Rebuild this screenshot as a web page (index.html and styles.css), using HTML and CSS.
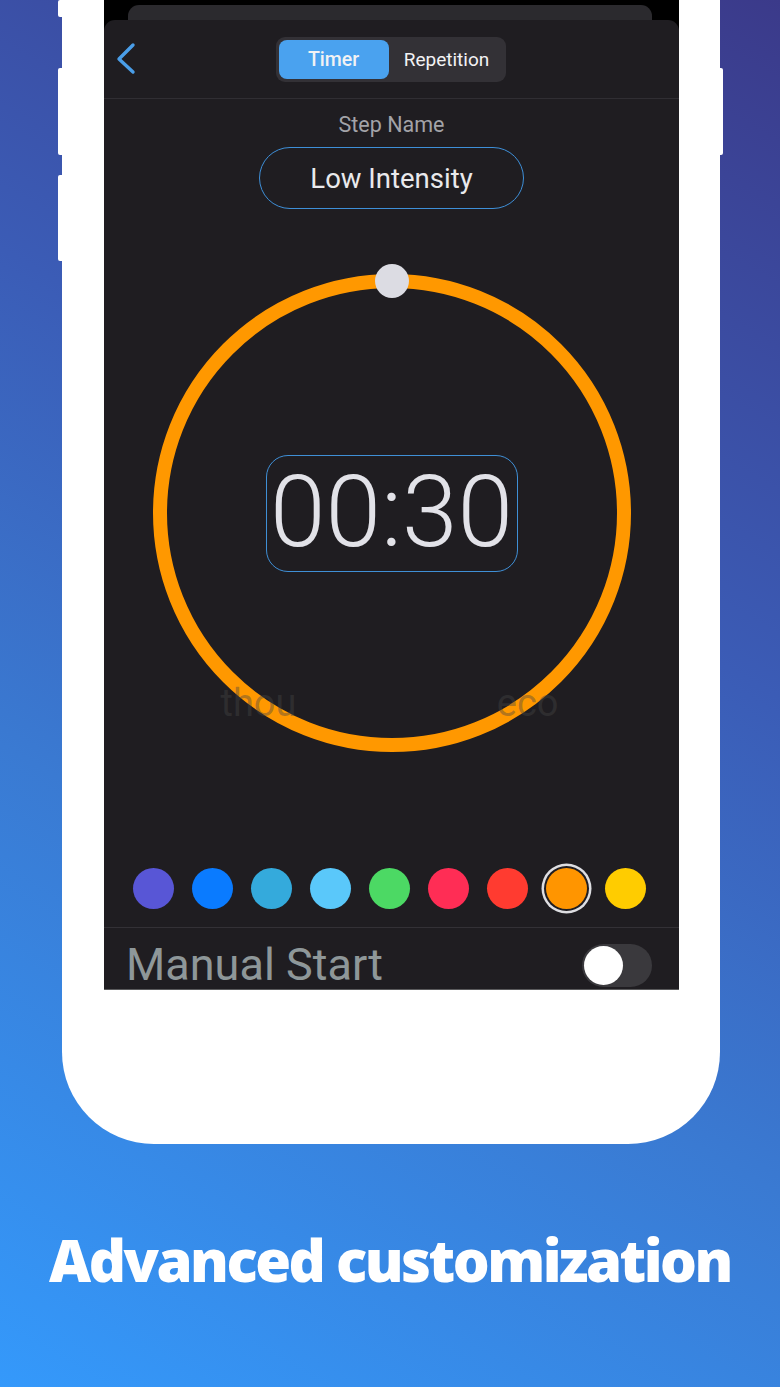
FILE: index.html
```html
<!DOCTYPE html>
<html lang="en">
<head>
<meta charset="utf-8">
<title>Advanced customization</title>
<link rel="stylesheet" href="styles.css">
</head>
<body>
<div class="page">
  <div class="phone">
    <span class="btn btn-l1"></span>
    <span class="btn btn-l2"></span>
    <span class="btn btn-l3"></span>
    <span class="btn btn-r1"></span>
    <div class="screen">
      <div class="back-card"></div>
      <div class="sheet">
        <div class="nav">
          <div class="nav-left">
            <svg class="chevron" width="22" height="34" viewBox="0 0 22 34"><path d="M17 3 L3 17 L17 30" fill="none" stroke="#4a9ee8" stroke-width="3.4" stroke-linecap="round" stroke-linejoin="round"/></svg>
          </div>
          <div class="segmented">
            <div class="seg seg-active">Timer</div>
            <div class="seg">Repetition</div>
          </div>
          <div class="nav-right"></div>
        </div>
        <div class="content">
          <div class="label">Step Name</div>
          <div class="pill">Low Intensity</div>
          <div class="dial">
            <div class="ghost"><span>thou</span><span>eco</span></div>
            <div class="handle"></div>
            <div class="time-box">00:30</div>
          </div>
          <div class="swatches">
            <span class="dot" style="background:#5856d6"></span>
            <span class="dot" style="background:#0a7bff"></span>
            <span class="dot" style="background:#34aadc"></span>
            <span class="dot" style="background:#5ac8fa"></span>
            <span class="dot" style="background:#4cd964"></span>
            <span class="dot" style="background:#ff2d55"></span>
            <span class="dot" style="background:#ff3b30"></span>
            <span class="dot dot-selected" style="background:#ff9500"></span>
            <span class="dot" style="background:#ffcc00"></span>
          </div>
          <div class="row">
            <span class="row-label">Manual Start</span>
            <span class="toggle"><span class="knob"></span></span>
          </div>
        </div>
      </div>
    </div>
  </div>
  <h1 class="title">Advanced customization</h1>
</div>
</body>
</html>
```
FILE: styles.css
```css
* { box-sizing: border-box; }
html, body { margin: 0; padding: 0; }
body {
  width: 780px;
  height: 1387px;
  overflow: hidden;
  background: linear-gradient(210deg, #3b3a8a 0%, #3b5cb6 38%, #3a7ad2 65%, #3499fb 100%);
  font-family: Roboto, "Liberation Sans", Arial, sans-serif;
}
.page {
  display: flex;
  flex-direction: column;
}
.phone {
  position: relative;
  margin-left: 62px;
  width: 658px;
  height: 1144px;
  background: #ffffff;
  border-radius: 0 0 92px 92px;
  padding-left: 42px;
}
.btn {
  position: absolute;
  width: 6px;
  background: #ffffff;
  border-radius: 2px;
}
.btn-l1 { left: -4px; top: 0; height: 17px; }
.btn-l2 { left: -4px; top: 68px; height: 87px; }
.btn-l3 { left: -4px; top: 175px; height: 86px; }
.btn-r1 { right: -3px; top: 68px; height: 87px; }

.screen {
  width: 575px;
  height: 990px;
  background: #000;
  overflow: hidden;
  display: flex;
  flex-direction: column;
  border-bottom: 1px solid #5a5a5c;
}
.back-card {
  margin: 5px 27px 0 24px;
  height: 15px;
  flex: none;
  background: #2b2a2e;
  border-radius: 11px 11px 0 0;
}
.sheet {
  flex: 1;
  background: #1f1d21;
  border-radius: 11px 11px 0 0;
  display: flex;
  flex-direction: column;
}
.nav {
  height: 79px;
  flex: none;
  border-bottom: 1px solid #302e33;
  display: grid;
  grid-template-columns: 1fr auto 1fr;
  align-items: center;
}
.nav-left { padding-left: 12px; display: flex; align-items: center; }
.chevron { display: block; }
.segmented {
  width: 230px;
  height: 45px;
  background: #333136;
  border-radius: 9px;
  padding: 3px;
  display: flex;
  margin-right: 2px;
}
.seg {
  flex: none;
  display: flex;
  align-items: center;
  justify-content: center;
  color: #f2f2f4;
  font-size: 19px;
  font-weight: 400;
}
.seg:first-child { width: 110px; }
.seg:last-child { flex: 1; padding-left: 2px; }
.seg-active {
  background: #4aa2ef;
  border-radius: 8px;
  font-size: 19.5px;
  font-weight: 500;
}
.content {
  display: flex;
  flex-direction: column;
  align-items: center;
}
.label {
  margin-top: 14px;
  font-size: 21.5px;
  line-height: 24px;
  color: #a3a3a8;
}
.pill {
  margin-top: 10px;
  width: 265px;
  height: 62px;
  border: 1.6px solid #3e8fd8;
  border-radius: 31px;
  display: flex;
  align-items: center;
  justify-content: center;
  font-size: 27.5px;
  color: #e9e9ec;
}
.dial {
  position: relative;
  margin-top: 65px;
  width: 478px;
  height: 478px;
  border: 14px solid #ff9800;
  border-radius: 50%;
  display: flex;
  align-items: center;
  justify-content: center;
}
.handle {
  position: absolute;
  top: -24px;
  left: 50%;
  margin-left: -17px;
  width: 34px;
  height: 34px;
  border-radius: 50%;
  background: #dcdce3;
}
.time-box {
  width: 252px;
  height: 117px;
  border: 1px solid #3f8fd6;
  border-radius: 22px;
  display: flex;
  align-items: center;
  justify-content: center;
  font-size: 100px;
  font-weight: 300;
  color: #e2e2e8;
  line-height: 1;
  padding-bottom: 2px;
}
.ghost {
  position: absolute;
  left: 54px;
  right: 58px;
  top: 395px;
  display: flex;
  justify-content: space-between;
  font-size: 38px;
  line-height: 40px;
  color: rgba(69, 69, 69, 0.42);
}
.swatches {
  margin-top: 116px;
  display: flex;
  gap: 18.1px;
  margin-right: 4px;
}
.dot {
  display: block;
  width: 41px;
  height: 41px;
  border-radius: 50%;
}
.dot-selected {
  box-shadow: 0 0 0 2px #1f1d21, 0 0 0 4.5px #dedee2;
}
.row {
  margin-top: 18px;
  align-self: stretch;
  height: 62px;
  border-top: 1px solid #333136;
  display: flex;
  align-items: flex-start;
  justify-content: space-between;
  padding: 16px 27px 0 22px;
}
.row-label {
  font-size: 45px;
  line-height: 42px;
  color: #8e9799;
}
.toggle {
  width: 70px;
  height: 43px;
  border-radius: 22px;
  background: #3a393d;
  padding: 2px;
  display: flex;
}
.knob {
  width: 39px;
  height: 39px;
  border-radius: 50%;
  background: #ffffff;
}
.title {
  margin: 80px 0 0;
  text-align: center;
  font-family: "Open Sans", "Noto Sans", sans-serif;
  font-weight: 800;
  font-size: 58px;
  line-height: 72px;
  letter-spacing: -2.5px;
  color: #ffffff;
}
```
